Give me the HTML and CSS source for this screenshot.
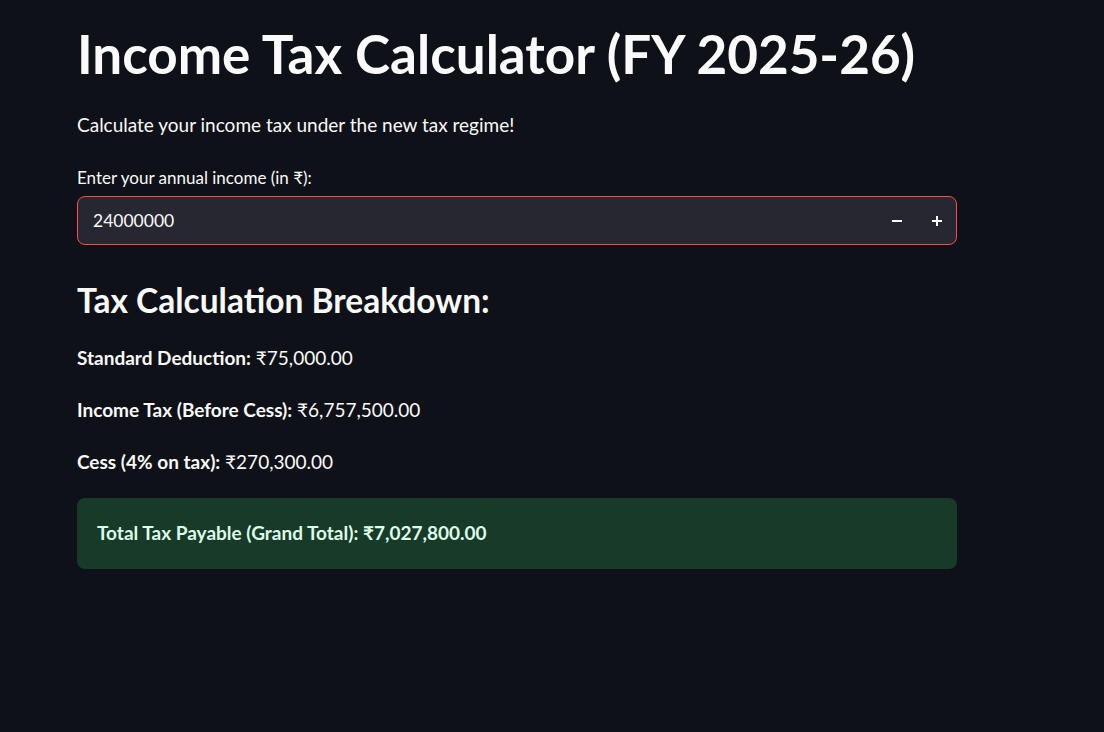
FILE: index.html
```html
<!DOCTYPE html>
<html lang="en">
<head>
<meta charset="utf-8">
<title>Income Tax Calculator</title>
<link rel="stylesheet" href="styles.css">
</head>
<body>
<main class="page">
  <h1 class="title">Income Tax Calculator (FY 2025-26)</h1>
  <p class="intro">Calculate your income tax under the new tax regime!</p>
  <label class="label" for="income">Enter your annual income (in ₹):</label>
  <div class="input-box">
    <input id="income" class="input" type="text" value="24000000">
    <button class="step" aria-label="decrement">
      <svg width="12" height="12" viewBox="0 0 12 12"><rect x="1" y="5" width="10" height="2" fill="#fafafa"/></svg>
    </button>
    <button class="step" aria-label="increment">
      <svg width="12" height="12" viewBox="0 0 12 12"><rect x="1" y="5" width="10" height="2" fill="#fafafa"/><rect x="5" y="1" width="2" height="10" fill="#fafafa"/></svg>
    </button>
  </div>
  <h3 class="subtitle">Tax Calculation Breakdown:</h3>
  <p class="line"><strong>Standard Deduction:</strong> ₹75,000.00</p>
  <p class="line"><strong>Income Tax (Before Cess):</strong> ₹6,757,500.00</p>
  <p class="line"><strong>Cess (4% on tax):</strong> ₹270,300.00</p>
  <div class="success"><strong>Total Tax Payable (Grand Total): ₹7,027,800.00</strong></div>
</main>
</body>
</html>
```

FILE: styles.css
```css
html, body {
  margin: 0;
  padding: 0;
  background: #0e1117;
  color: #fafafa;
  font-family: Lato, "Noto Sans", sans-serif;
}
.page {
  width: 880px;
  padding: 23px 0 0 77px;
  display: flex;
  flex-direction: column;
}
.title {
  margin: 0;
  font-size: 53px;
  line-height: 62px;
  font-weight: 700;
}
.intro {
  margin: 26px 0 0;
  font-size: 19px;
  line-height: 28px;
}
.label {
  margin-top: 27px;
  font-size: 17px;
  line-height: 24px;
}
.input-box {
  margin-top: 6px;
  height: 49px;
  box-sizing: border-box;
  border: 1px solid #ff4b4b;
  border-radius: 8px;
  background: #262730;
  display: flex;
  align-items: center;
}
.input {
  flex: 1;
  min-width: 0;
  background: transparent;
  border: none;
  outline: none;
  color: #fafafa;
  font-family: inherit;
  font-size: 17.5px;
  padding: 0 0 0 15px;
}
.step {
  width: 40px;
  height: 100%;
  background: transparent;
  border: none;
  padding: 0;
  display: flex;
  align-items: center;
  justify-content: center;
}
.step:last-child {
  width: 39px;
}
.subtitle {
  margin: 35px 0 0;
  font-size: 33.5px;
  line-height: 40px;
  font-weight: 700;
}
.line {
  margin: 24px 0 0;
  font-size: 19px;
  line-height: 28px;
}
.line strong {
  font-weight: 700;
}
.success {
  margin-top: 22px;
  padding: 21px 20px 22px;
  border-radius: 8px;
  background: #173a29;
  color: #dffde9;
  font-size: 19px;
  line-height: 28px;
}
```
